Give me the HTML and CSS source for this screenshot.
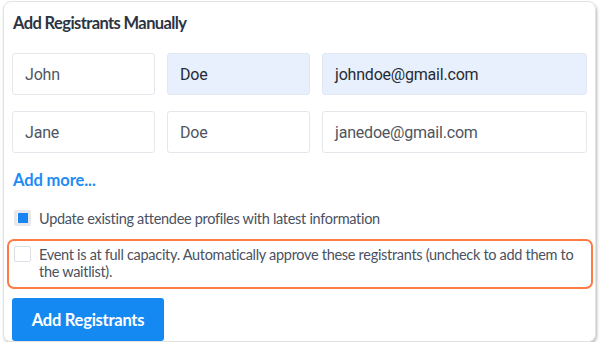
FILE: index.html
```html
<!DOCTYPE html>
<html>
<head>
<meta charset="utf-8">
<link rel="stylesheet" href="styles.css">
</head>
<body>
<div class="card">
  <h2 class="title">Add Registrants Manually</h2>
  <div class="grid">
    <div class="field">John</div>
    <div class="field filled">Doe</div>
    <div class="field filled">johndoe@gmail.com</div>
    <div class="field">Jane</div>
    <div class="field">Doe</div>
    <div class="field">janedoe@gmail.com</div>
  </div>
  <a class="more">Add more...</a>
  <label class="check-row">
    <span class="box checked"><span class="tick"></span></span>
    <span class="label">Update existing attendee profiles with latest information</span>
  </label>
  <label class="check-row warn">
    <span class="box"></span>
    <span class="label">Event is at full capacity. Automatically approve these registrants (uncheck to add them to the waitlist).</span>
  </label>
  <button class="btn">Add Registrants</button>
</div>
</body>
</html>
```
FILE: styles.css
```css
html, body {
  margin: 0;
  padding: 0;
  background: #ffffff;
}
.card {
  box-sizing: border-box;
  margin: 1px 0 0 3px;
  width: 593px;
  height: 341px;
  border: 1px solid #e2e2e2;
  border-radius: 8px;
  box-shadow: 1px 2px 3px rgba(0, 0, 0, 0.28);
  padding: 10px 8px 0 8px;
  display: flex;
  flex-direction: column;
  align-items: flex-start;
  font-family: Lato, "Noto Sans", sans-serif;
  color: #4a5262;
}
.title {
  margin: 0 0 0 1px;
  font-size: 16.5px;
  line-height: 22px;
  font-weight: 700;
  color: #2c3442;
  letter-spacing: -0.6px;
}
.grid {
  margin-top: 19px;
  display: grid;
  grid-template-columns: 143px 143px 265px;
  column-gap: 12px;
  row-gap: 16px;
}
.field {
  box-sizing: border-box;
  height: 42px;
  border: 1px solid #e4e7eb;
  border-radius: 3px;
  background: #ffffff;
  padding: 0 12px;
  display: flex;
  align-items: center;
  font-family: Roboto, "Liberation Sans", sans-serif;
  font-size: 16px;
  letter-spacing: -0.2px;
  color: #50555e;
}
.field.filled {
  background: #e8f0fe;
  border-color: #e1e8f4;
  color: #262b33;
}
.more {
  margin: 16px 0 0 1px;
  font-size: 16.5px;
  line-height: 22px;
  font-weight: 700;
  color: #1e8cf5;
  letter-spacing: -0.1px;
}
.check-row {
  display: flex;
  align-items: flex-start;
  gap: 8px;
  font-size: 14.5px;
  line-height: 17px;
  letter-spacing: -0.3px;
}
.check-row:not(.warn) {
  margin-top: 19px;
  padding-left: 2px;
}
.box {
  flex: none;
  box-sizing: border-box;
  width: 17px;
  height: 16px;
  border: 1px solid #dcdfe3;
  border-radius: 2px;
  background: #ffffff;
  display: flex;
  align-items: center;
  justify-content: center;
}
.box.checked {
  border: 3px solid #e6e8eb;
  background: #ffffff;
}
.tick {
  width: 10px;
  height: 10px;
  background: #1784f2;
}
.warn {
  box-sizing: border-box;
  margin: 12px 0 0 -5px;
  width: 586px;
  height: 50px;
  border: 2px solid #ff7a45;
  border-radius: 7px;
  padding: 5px 8px 0 5px;
}
.btn {
  margin-top: 9px;
  width: 152px;
  height: 43px;
  border: none;
  border-radius: 3px;
  background: #1589f2;
  color: #ffffff;
  font-family: Lato, "Noto Sans", sans-serif;
  font-size: 16.5px;
  font-weight: 700;
  letter-spacing: -0.25px;
  padding: 0;
}
```
